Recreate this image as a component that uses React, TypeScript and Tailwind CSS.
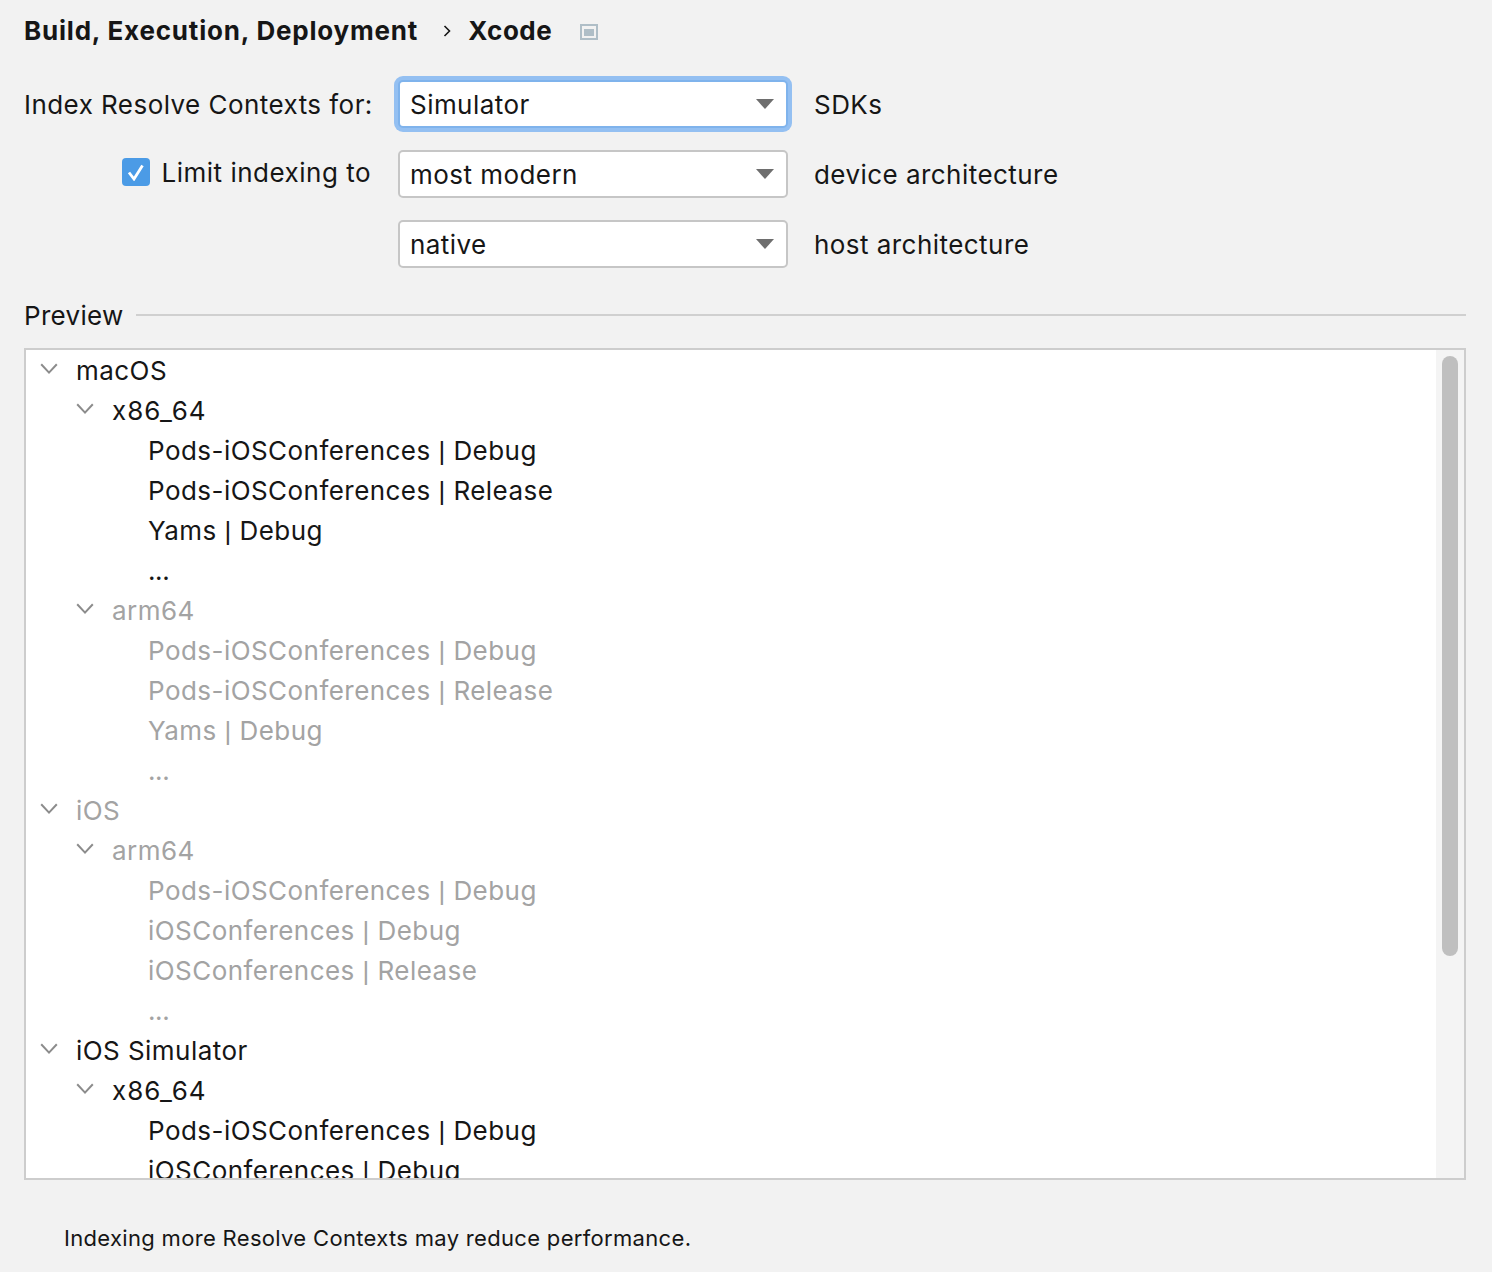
const Arrow = () => (
  <svg width="18" height="10" viewBox="0 0 18 10" className="shrink-0">
    <path d="M0 0H18L9 10Z" fill="#6e6e6e" />
  </svg>
);

const Chevron = () => (
  <svg width="18" height="12" viewBox="0 0 18 12" className="shrink-0">
    <path d="M1.2 1.2L9 9.6L16.8 1.2" fill="none" stroke="#8c8c8c" strokeWidth="2" />
  </svg>
);

const Combo = ({ text, focused }: { text: string; focused?: boolean }) => (
  <div
    className={
      focused
        ? "flex h-[48px] w-[390px] items-center justify-between rounded-[5px] border-2 border-[#7fb3ec] bg-white pl-[10px] pr-[12px] shadow-[0_0_0_4px_#94c0f2]"
        : "flex h-[48px] w-[390px] items-center justify-between rounded-[5px] border-2 border-[#c6c6c6] bg-white pl-[10px] pr-[12px]"
    }
  >
    <span className={focused ? "" : "pt-[1px]"}>{text}</span>
    <Arrow />
  </div>
);

type Row = { label: string; level: number; muted?: boolean; caret?: boolean };

const rows: Row[] = [
  { label: "macOS", level: 0, caret: true },
  { label: "x86_64", level: 1, caret: true },
  { label: "Pods-iOSConferences | Debug", level: 2 },
  { label: "Pods-iOSConferences | Release", level: 2 },
  { label: "Yams | Debug", level: 2 },
  { label: "...", level: 2 },
  { label: "arm64", level: 1, caret: true, muted: true },
  { label: "Pods-iOSConferences | Debug", level: 2, muted: true },
  { label: "Pods-iOSConferences | Release", level: 2, muted: true },
  { label: "Yams | Debug", level: 2, muted: true },
  { label: "...", level: 2, muted: true },
  { label: "iOS", level: 0, caret: true, muted: true },
  { label: "arm64", level: 1, caret: true, muted: true },
  { label: "Pods-iOSConferences | Debug", level: 2, muted: true },
  { label: "iOSConferences | Debug", level: 2, muted: true },
  { label: "iOSConferences | Release", level: 2, muted: true },
  { label: "...", level: 2, muted: true },
  { label: "iOS Simulator", level: 0, caret: true },
  { label: "x86_64", level: 1, caret: true },
  { label: "Pods-iOSConferences | Debug", level: 2 },
  { label: "iOSConferences | Debug", level: 2 },
];

const indent = ["pl-[50px]", "pl-[86px]", "pl-[122px]"];
const caretPos = ["pl-[14px]", "pl-[50px]"];

const Label = ({ text }: { text: string }) => {
  if (text === "...") return <span className="tracking-[-0.4px]">{text}</span>;
  if (text === "x86_64") return <span className="tracking-[0.95px]">{text}</span>;
  const parts = text.split(" | ");
  if (parts.length < 2) return <>{text}</>;
  return (
    <>
      {parts[0]} <span className="font-['Liberation_Sans',sans-serif] leading-none">|</span> {parts[1]}
    </>
  );
};

export default function App() {
  return (
    <div className="h-[1272px] w-[1492px] overflow-hidden bg-[#f2f2f2] pl-[24px] pr-[26px] font-['Inter','Liberation_Sans',sans-serif] text-[26px] tracking-[0.45px] text-[#161616]">
      <div className="flex h-[62px] items-center">
        <span className="-mt-[1px] font-bold tracking-[0.8px]">Build, Execution, Deployment</span>
        <svg width="10" height="14" viewBox="0 0 10 14" className="ml-[24px]">
          <path d="M2.5 2L7.5 7L2.5 12" fill="none" stroke="#161616" strokeWidth="1.6" />
        </svg>
        <span className="-mt-[1px] ml-[16px] font-bold tracking-[0.5px]">Xcode</span>
        <svg width="18" height="16" viewBox="0 0 18 16" className="ml-[28px] mt-[2px]">
          <rect x="1" y="1" width="16" height="14" fill="none" stroke="#afbec7" strokeWidth="2" />
          <rect x="4" y="5" width="10" height="7" fill="#afbec7" />
        </svg>
      </div>

      <div className="mt-[18px] grid grid-cols-[348px_390px_auto] items-center gap-x-[26px] gap-y-[22px]">
        <div className="whitespace-nowrap pr-[1px] text-right">Index Resolve Contexts for:</div>
        <Combo text="Simulator" focused />
        <div>SDKs</div>

        <div className="-mt-[4px] flex items-center justify-end gap-[12px] pr-[1px]">
          <span className="flex h-[28px] w-[28px] items-center justify-center rounded-[4px] bg-[#4b9be6]">
            <svg width="18" height="18" viewBox="0 0 18 18">
              <path d="M2 9.5L7 16L15.5 2.5" fill="none" stroke="#ffffff" strokeWidth="2.8" />
            </svg>
          </span>
          <span className="tracking-[0.5px]">Limit indexing to</span>
        </div>
        <Combo text="most modern" />
        <div className="pt-[1px]">device architecture</div>

        <div />
        <Combo text="native" />
        <div className="pt-[1px]">host architecture</div>
      </div>

      <div className="mb-[10px] mt-[24px] flex h-[46px] items-center gap-[12px]">
        <span className="tracking-[0.3px]">Preview</span>
        <div className="h-[2px] flex-1 bg-[#d0d0d0]" />
      </div>

      <div className="flex h-[832px] overflow-hidden border-2 border-[#cdcdcd] bg-white">
        <div className="min-w-0 flex-1">
          {rows.map((r, i) => (
            <div key={i} className="relative flex h-[40px] items-center">
              {r.caret && (
                <div className={"absolute top-[13px] left-0 " + caretPos[r.level]}>
                  <Chevron />
                </div>
              )}
              <span className={indent[r.level] + (r.muted ? " text-[#a3a3a3]" : "")}>
                <Label text={r.label} />
              </span>
            </div>
          ))}
        </div>
        <div className="w-[28px] shrink-0 bg-[#f4f4f4] px-[6px] pt-[6px]">
          <div className="h-[600px] w-[16px] rounded-full bg-[#bfbfbf]" />
        </div>
      </div>

      <div className="mt-[42px] pl-[40px] text-[22px] tracking-[0.32px]">
        Indexing more Resolve Contexts may reduce performance.
      </div>
    </div>
  );
}
